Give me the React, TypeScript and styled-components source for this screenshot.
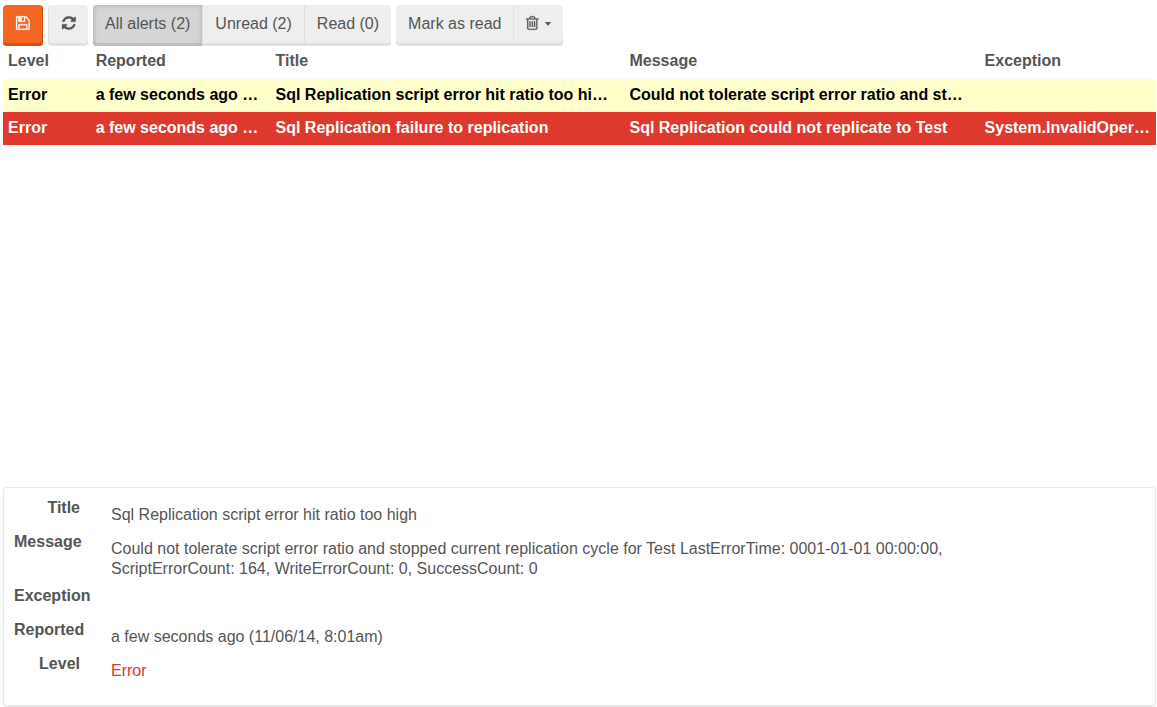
import React, { useState } from "react";
import styled, { createGlobalStyle, css } from "styled-components";

const GlobalStyle = createGlobalStyle`
  *, *::before, *::after { box-sizing: border-box; }
  body {
    margin: 0;
    background: #fff;
    color: #555;
    font-family: "Liberation Sans", Arial, sans-serif;
    font-size: 16px;
    line-height: 20px;
  }
`;

const Page = styled.main`
  display: flex;
  flex-direction: column;
  min-height: 100vh;
  padding: 5px 1px 0 3px;
`;

const Toolbar = styled.div`
  display: flex;
  flex-wrap: wrap;
  gap: 5px;
`;

const ButtonGroup = styled.div`
  display: flex;
`;

const Button = styled.button<{ $primary?: boolean; $active?: boolean }>`
  display: flex;
  align-items: center;
  justify-content: center;
  gap: 6px;
  min-width: 40px;
  height: 41px;
  margin: 0;
  padding: 1px 12px 4px;
  border: 0;
  background: #eee;
  box-shadow: inset 0 -3px 0 #e1e1e1;
  color: #555;
  font: inherit;
  white-space: nowrap;
  cursor: pointer;

  &:first-child { border-radius: 4px 0 0 4px; }
  &:last-child { border-radius: 0 4px 4px 0; }
  &:only-child { border-radius: 4px; }
  & + & { border-left: 1px solid #e1e1e1; }

  ${Toolbar} > & { border: 0; border-radius: 4px; }

  ${(p) =>
    p.$primary &&
    css`
      background: #f26522;
      box-shadow: inset -1px -3px 0 #dc4e0d;
      color: #fff;
    `}

  ${(p) =>
    p.$active &&
    css`
      background: #d5d5d5;
      box-shadow: inset 0 0 4px 1px #b8b8b8, inset 0 -3px 0 #c4c4c4;
    `}
`;

const Caret = styled.span`
  border-top: 4px solid #555;
  border-left: 3px solid transparent;
  border-right: 3px solid transparent;
`;

const Glyph = styled.svg`
  display: block;
  height: 16px;
  margin-bottom: 2px;
  overflow: visible;
  fill: currentColor;
  stroke: currentColor;
  stroke-width: 24;
`;

const AlertTable = styled.table`
  width: 100%;
  table-layout: fixed;
  border-collapse: collapse;
  font-weight: bold;
`;

const Col = styled.col<{ $share?: number }>`
  width: ${(p) => (p.$share ? `${p.$share}%` : "auto")};
`;

const HeadCell = styled.th`
  padding: 5px 5px 8px;
  text-align: left;
`;

const Row = styled.tr<{ $selected?: boolean }>`
  background: ${(p) => (p.$selected ? "#ffffcc" : "#df382c")};
  color: ${(p) => (p.$selected ? "#000" : "#fff")};
  cursor: pointer;
`;

const Cell = styled.td`
  padding: 6px 4px 7px 5px;
  overflow: hidden;
  text-overflow: ellipsis;
  white-space: nowrap;
`;

const TableArea = styled.div`
  flex: 1;
`;

const Details = styled.dl`
  min-height: 220px;
  margin: 0;
  padding: 10px 10px 16px;
  border: 1px solid #e8e8e8;
  border-bottom-width: 2px;
  border-radius: 4px;
`;

const Field = styled.div`
  display: flex;
  gap: 31px;
  min-height: 34px;
`;

const Label = styled.dt`
  width: 66px;
  flex: none;
  font-weight: bold;
  text-align: right;
`;

const Value = styled.dd<{ $danger?: boolean }>`
  width: 75%;
  margin: 0;
  padding: 7px 0;
  color: ${(p) => (p.$danger ? "#df382c" : "inherit")};
`;

const SaveIcon = () => (
  <Glyph viewBox="0 0 1536 1792" aria-hidden="true">
    <path d="M384 1536h768v-384h-768v384zM1280 1536h128v-896q0-14-10-38.500t-20-34.500l-281-281q-10-10-34-20t-39-10v416q0 40-28 68t-68 28h-576q-40 0-68-28t-28-68v-416h-128v1280h128v-416q0-40 28-68t68-28h832q40 0 68 28t28 68v416zM896 608v-320q0-13-9.500-22.500t-22.500-9.500h-192q-13 0-22.500 9.500t-9.500 22.500v320q0 13 9.500 22.500t22.500 9.500h192q13 0 22.500-9.500t9.500-22.500zM1536 640v928q0 40-28 68t-68 28h-1344q-40 0-68-28t-28-68v-1344q0-40 28-68t68-28h928q40 0 88 20t76 48l280 280q28 28 48 76t20 88z" />
  </Glyph>
);

const RefreshIcon = () => (
  <Glyph viewBox="0 -128 1536 1792" aria-hidden="true">
    <path d="M1511 928q0 5-1 7-64 268-268 434.500t-478 166.500q-146 0-282.500-55t-243.500-157l-129 129q-19 19-45 19t-45-19-19-45v-448q0-26 19-45t45-19h448q26 0 45 19t19 45-19 45l-137 137q71 66 161 102t187 36q134 0 250-65t186-179q11-17 53-117 8-23 30-23h192q13 0 22.500 9.500t9.500 22.500zm25-800v448q0 26-19 45t-45 19h-448q-26 0-45-19t-19-45 19-45l138-138q-148-137-349-137-134 0-250 65t-186 179q-11 17-53 117-8 23-30 23h-199q-13 0-22.500-9.500t-9.500-22.500v-7q65-268 270-434.500t480-166.500q146 0 284 55.500t245 156.500l130-129q19-19 45-19t45 19 19 45z" />
  </Glyph>
);

const TrashIcon = () => (
  <Glyph viewBox="0 -128 1408 1792" aria-hidden="true">
    <path d="M512 608v576q0 14-9 23t-23 9h-64q-14 0-23-9t-9-23v-576q0-14 9-23t23-9h64q14 0 23 9t9 23zM768 608v576q0 14-9 23t-23 9h-64q-14 0-23-9t-9-23v-576q0-14 9-23t23-9h64q14 0 23 9t9 23zM1024 608v576q0 14-9 23t-23 9h-64q-14 0-23-9t-9-23v-576q0-14 9-23t23-9h64q14 0 23 9t9 23zM1152 1332v-948h-896v948q0 22 7 40.500t14.500 27 10.500 8.500h832q3 0 10.500-8.500t14.500-27 7-40.500zM480 256h448l-48-117q-7-9-17-11h-317q-10 2-17 11zM1408 288v64q0 14-9 23t-23 9h-96v948q0 83-47 143.500t-113 60.500h-832q-66 0-113-58.500t-47-141.500v-952h-96q-14 0-23-9t-9-23v-64q0-14 9-23t23-9h309l70-167q15-37 54-63t79-26h320q40 0 79 26t54 63l70 167h309q14 0 23 9t9 23z" />
  </Glyph>
);

const columns = [
  { name: "Level", share: 7.6 },
  { name: "Reported", share: 15.6 },
  { name: "Title", share: 30.7 },
  { name: "Message", share: 30.8 },
  { name: "Exception" },
];

// Each alert carries the shortened texts of its table row beside the full ones.
const alerts = [
  {
    level: "Error",
    reported: "a few seconds ago (11/06/14, 8:01am)",
    title: "Sql Replication script error hit ratio too high",
    message:
      "Could not tolerate script error ratio and stopped current replication cycle for Test LastErrorTime: 0001-01-01 00:00:00, ScriptErrorCount: 164, WriteErrorCount: 0, SuccessCount: 0",
    exception: "",
    summary: [
      "Error",
      "a few seconds ago …",
      "Sql Replication script error hit ratio too hi…",
      "Could not tolerate script error ratio and st…",
      "",
    ],
  },
  {
    level: "Error",
    reported: "a few seconds ago (11/06/14, 8:01am)",
    title: "Sql Replication failure to replication",
    message: "Sql Replication could not replicate to Test",
    exception: "System.InvalidOperationException",
    summary: [
      "Error",
      "a few seconds ago …",
      "Sql Replication failure to replication",
      "Sql Replication could not replicate to Test",
      "System.InvalidOper…",
    ],
  },
];

const filters = ["All alerts (2)", "Unread (2)", "Read (0)"];

export default function App() {
  const [filter, setFilter] = useState(0);
  const [selected, setSelected] = useState(0);
  const current = alerts[selected];

  return (
    <Page>
      <GlobalStyle />
      <Toolbar role="toolbar" aria-label="Alerts">
        <Button type="button" $primary aria-label="Save">
          <SaveIcon />
        </Button>
        <Button type="button" aria-label="Refresh">
          <RefreshIcon />
        </Button>
        <ButtonGroup>
          {filters.map((name, i) => (
            <Button
              key={name}
              type="button"
              $active={i === filter}
              aria-pressed={i === filter}
              onClick={() => setFilter(i)}
            >
              {name}
            </Button>
          ))}
        </ButtonGroup>
        <ButtonGroup>
          <Button type="button">Mark as read</Button>
          <Button type="button" aria-label="Delete" aria-haspopup="menu">
            <TrashIcon />
            <Caret />
          </Button>
        </ButtonGroup>
      </Toolbar>
      <TableArea>
        <AlertTable>
          <colgroup>
            {columns.map((c) => (
              <Col key={c.name} $share={c.share} />
            ))}
          </colgroup>
          <thead>
            <tr>
              {columns.map((c) => (
                <HeadCell key={c.name} scope="col">
                  {c.name}
                </HeadCell>
              ))}
            </tr>
          </thead>
          <tbody>
            {alerts.map((a, i) => (
              <Row key={a.title} $selected={i === selected} onClick={() => setSelected(i)}>
                {a.summary.map((text, c) => (
                  <Cell key={columns[c].name}>{text}</Cell>
                ))}
              </Row>
            ))}
          </tbody>
        </AlertTable>
      </TableArea>
      <Details>
        <Field>
          <Label>Title</Label>
          <Value>{current.title}</Value>
        </Field>
        <Field>
          <Label>Message</Label>
          <Value>{current.message}</Value>
        </Field>
        <Field>
          <Label>Exception</Label>
          <Value>{current.exception}</Value>
        </Field>
        <Field>
          <Label>Reported</Label>
          <Value>{current.reported}</Value>
        </Field>
        <Field>
          <Label>Level</Label>
          <Value $danger>{current.level}</Value>
        </Field>
      </Details>
    </Page>
  );
}
